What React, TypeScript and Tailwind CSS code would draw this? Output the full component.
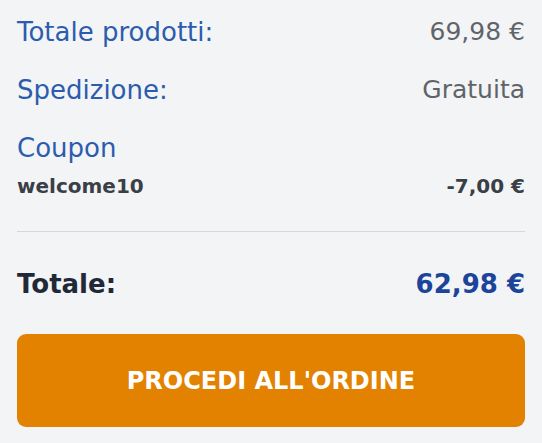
import React from 'react';

type Row = { label: string; value: string };

const rows: Row[] = [
  { label: 'Totale prodotti:', value: '69,98 €' },
  { label: 'Spedizione:', value: 'Gratuita' },
];

export default function App() {
  return (
    <div
      className="min-h-[443px] w-full bg-[#f3f4f6] px-[17px] pt-[17px] text-[#4b5563]"
      style={{ fontFamily: '"DejaVu Sans", sans-serif' }}
    >
      <div className="flex flex-col">
        {rows.map((row) => (
          <div key={row.label} className="flex h-[58px] items-start justify-between">
            <span className="text-[26px] leading-[30px] text-[#2c5cad]">{row.label}</span>
            <span className="text-[25px] leading-[30px] text-[#606469]">{row.value}</span>
          </div>
        ))}

        {/* Coupon */}
        <div className="flex flex-col">
          <span className="text-[26px] leading-[30px] text-[#2c5cad]">Coupon</span>
          <div className="mt-[11px] flex items-center justify-between">
            <span className="text-[20px] font-bold leading-[24px] text-[#3a3f47]">welcome10</span>
            <span className="text-[20px] font-bold leading-[24px] text-[#3a3f47]">-7,00 €</span>
          </div>
        </div>

        <div className="mt-[33px] h-px bg-[#d4d7dc]" />

        {/* Totale */}
        <div className="mt-[36px] flex items-center justify-between">
          <span className="text-[26px] font-bold leading-[32px] text-[#1f2937]">Totale:</span>
          <span className="text-[26px] font-bold leading-[32px] text-[#1b449a]">62,98 €</span>
        </div>

        <button className="mt-[34px] flex h-[93px] w-full items-center justify-center rounded-[9px] bg-[#e38200] text-[24px] font-bold uppercase text-white">
          Procedi all'ordine
        </button>
      </div>
    </div>
  );
}
